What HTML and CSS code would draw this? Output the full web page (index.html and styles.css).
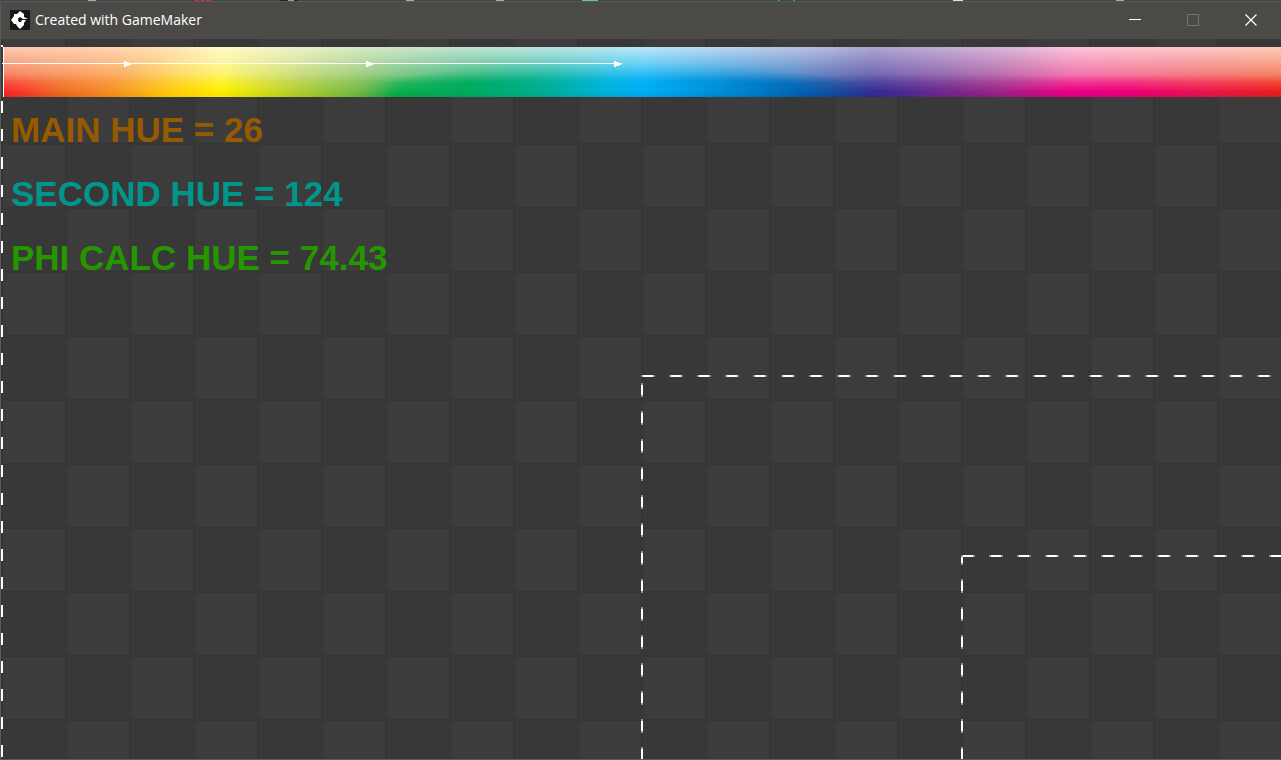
FILE: index.html
```html
<!DOCTYPE html>
<html lang="en">
<head>
<meta charset="utf-8">
<title>Created with GameMaker</title>
<link rel="stylesheet" href="styles.css">
</head>
<body>
<div class="desktop-edge"></div>
<div class="window">
  <header class="titlebar">
    <svg class="app-icon" viewBox="0 0 20 20" aria-hidden="true">
      <rect width="20" height="20" fill="#171717"/>
      <path d="M10 1l4 3v3l5 2.500v.5h-3l-2 3v2l-4 4-3-3-1-2H4l-3-4 3-4V4h3z" fill="#fff"/>
      <path d="M10 7l3 2h6v1h-7l-1 2H9l-1-2V8.500z" fill="#171717"/>
    </svg>
    <h1 class="title">Created with GameMaker</h1>
    <div class="controls">
      <button class="control" type="button" aria-label="Minimize">
        <svg viewBox="0 0 12 12" aria-hidden="true"><path d="M0 5.5h12" stroke="#fff"/></svg>
      </button>
      <button class="control" type="button" aria-label="Maximize" disabled>
        <svg viewBox="0 0 12 12" aria-hidden="true"><path d="M.5 .5h11v11H.5z" stroke="#74736f"/></svg>
      </button>
      <button class="control" type="button" aria-label="Close">
        <svg viewBox="0 0 12 12" aria-hidden="true"><path d="M.5 .5l11 11M11.5 .5l-11 11" stroke="#fff" stroke-width="1.2"/></svg>
      </button>
    </div>
  </header>
  <main class="room">
    <div class="view view-outer"></div>
    <div class="view view-middle"></div>
    <div class="view view-inner"></div>
    <div class="spectrum">
      <div class="band band-bottom"></div>
      <div class="band band-low"></div>
      <div class="band band-mid"></div>
      <div class="band band-low band-core"></div>
      <div class="band band-top"></div>
      <svg class="arrows" width="622" height="50" viewBox="0 0 622 50" shape-rendering="crispEdges" aria-hidden="true">
        <path d="M0 16h620v1H0z" fill="#fff"/>
        <path d="M122 14h2v1h3v1h2v2h-2v1h-3v1h-2zM364 14h2v1h3v1h2v2h-2v1h-3v1h-2zM612 14h2v1h3v1h3v1h-1v1h-2v1h-3v1h-2z" fill="#fff"/>
      </svg>
    </div>
    <div class="readout">
      <p class="hue hue-main">MAIN HUE = 26</p>
      <p class="hue hue-second">SECOND HUE = 124</p>
      <p class="hue hue-phi">PHI CALC HUE = 74.43</p>
    </div>
  </main>
</div>
</body>
</html>
```
FILE: styles.css
```css
* { box-sizing: border-box; }

body {
  margin: 0;
  min-height: 100vh;
  display: flex;
  flex-direction: column;
  background: #383838;
  font-family: "Liberation Sans", Arial, sans-serif;
}

/* Sliver of the desktop above the window */
.desktop-edge {
  height: 1px;
  background:
    linear-gradient(#aaa, #aaa) 88px 0 / 8px 1px no-repeat,
    linear-gradient(90deg, #e02c2c 4px, transparent 4px 6px, #e02c2c 6px 10px, transparent 10px 12px, #e02c2c 12px) 195px 0 / 16px 1px no-repeat,
    linear-gradient(90deg, #222 8px, #999 8px 14px, #222 14px) 280px 0 / 18px 1px no-repeat,
    linear-gradient(#aaa, #aaa) 406px 0 / 8px 1px no-repeat,
    linear-gradient(#aaa, #aaa) 496px 0 / 8px 1px no-repeat,
    linear-gradient(#55c5ab, #55c5ab) 582px 0 / 16px 1px no-repeat,
    linear-gradient(90deg, #2bb673 2px, transparent 2px 15px, #2ba98f 15px) 778px 0 / 17px 1px no-repeat,
    linear-gradient(#ddd, #ddd) 953px 0 / 10px 1px no-repeat,
    linear-gradient(#aaa, #aaa) 1116px 0 / 8px 1px no-repeat,
    #36474f;
}

.window {
  flex: 1;
  display: flex;
  flex-direction: column;
  border: solid #5a5a5a;
  border-width: 1px 0 1px 1px;
}

.titlebar {
  display: flex;
  align-items: center;
  height: 37px;
  padding: 0 1px 2px 9px;
  background: #4b4a47;
}

.app-icon { width: 20px; height: 20px; }

.title {
  margin: 0 auto 0 5px;
  font: 400 14px/20px "Open Sans", "Noto Sans", sans-serif;
  color: #fff;
}

.controls { display: flex; height: 100%; }

.control {
  display: flex;
  align-items: center;
  justify-content: center;
  width: 58px;
  padding: 0;
  border: 0;
  background: none;
}

.control svg { width: 12px; height: 12px; fill: none; }

/* Checkerboard of 64px tiles with 2px seams */
.room {
  position: relative;
  flex: 1;
  padding-top: 8px;
  overflow: hidden;
  background:
    repeating-linear-gradient(90deg, #353535 0 2px, transparent 2px 64px),
    repeating-linear-gradient(#353535 0 2px, transparent 2px 64px) 0 -24px / 100% 1024px,
    repeating-conic-gradient(#383838 0 25%, #3c3c3c 0 50%) 0 -24px / 128px 128px;
}

/* Dashed view outlines */
.view { position: absolute; right: 0; bottom: 0; }

.view-outer {
  top: 6px;
  left: 0;
  background: repeating-linear-gradient(#fff 0 12px, transparent 12px 28px) 0 0 / 2px 100% no-repeat;
}

.view-middle,
.view-inner {
  --dash: #929292 0 2px, #fff 2px 12px, #929292 12px 14px, transparent 14px 28px;
  background:
    repeating-linear-gradient(90deg, var(--dash)) 0 0 / 100% 2px no-repeat,
    repeating-linear-gradient(var(--dash)) 0 var(--start) / 2px calc(100% + 28px) no-repeat;
}

.view-middle { --start: 8px; top: 336px; left: 640px; }
.view-inner { --start: -4px; top: 516px; left: 960px; }

.spectrum {
  position: relative;
  height: 50px;
  margin-left: 2px;
  border-left: 1px solid #fff;
  box-shadow: -2px 0 #383838;
}

.band,
.arrows { position: absolute; inset: 0; }

.arrows { left: -2px; }

.band-bottom {
  background: linear-gradient(90deg, #e01e26 0%, #e0571c 4%, #e89010 9%, #f5c800 13%, #f2e600 17%, #a9c520 23%, #62ae35 28%, #00a040 30.5%, #009a4c 35%, #009a84 42%, #0098c8 47%, #0098dc 50%, #0078bb 56%, #0058a0 62%, #0a4090 65%, #2c2684 68%, #602480 73%, #8c1c7c 78%, #d0007c 83%, #d4006c 88%, #d41245 94%, #cf1d20 100%);
}

.band-low {
  background: linear-gradient(90deg, #ff2630 0%, #f26a2a 4%, #f89828 9%, #ffcc10 13%, #fff000 17%, #b4d038 23%, #74bb4c 28%, #0ab050 31%, #00ac5c 36%, #00b090 42%, #00b4dc 47%, #00b0f5 50%, #0090d8 56%, #0068b8 62%, #1850a0 65%, #353095 68%, #6c2c90 73%, #a0288c 78%, #ee0088 83%, #f0007c 88%, #f01650 94%, #f02020 100%);
  mask-image: linear-gradient(#000 84%, transparent 104%);
}

.band-mid {
  background: linear-gradient(90deg, #f47050 0%, #f78a50 4%, #faa650 9%, #fed250 13%, #fff450 17%, #c4d86c 23%, #94c870 28%, #5cbe78 32%, #2cb67c 37%, #08b8a4 42%, #08bcdc 47%, #10baf5 50%, #209cdc 56%, #4382c4 62%, #566cb2 65%, #6258aa 68%, #885aa8 73%, #b45ca4 78%, #f062a4 83.5%, #f2648c 88%, #f26868 94%, #f2704a 100%);
  mask-image: linear-gradient(#000 54%, transparent 88%);
}

/* Fully saturated green-to-blue part that reaches higher than the rest */
.band-core {
  mask-image:
    linear-gradient(#000 84%, transparent 104%),
    radial-gradient(ellipse 21% 75% at 48% 105%, #000 65%, transparent);
  mask-composite: intersect;
}

.band-top {
  background: linear-gradient(90deg, #fbc8ae 0%, #fcccae 6%, #fddcae 12%, #fff8c8 17%, #e8f0c4 23%, #d2e6c2 28%, #bce0cc 36%, #b4e2dc 43%, #b4e4fa 50%, #b4d0ee 57%, #b4bce0 63%, #a8a2d0 68%, #bea8d2 73%, #dab4d6 79%, #fbc0d8 84%, #fbc4c8 91%, #fcc8b4 100%);
  mask-image: linear-gradient(#000 4%, transparent 70%);
}

.readout {
  display: flex;
  flex-direction: column;
  gap: 24px;
  padding: 13px 10px;
  position: relative;
}

.hue {
  margin: 0;
  font-size: 35px;
  font-weight: 700;
  line-height: 40px;
}

.hue-main { color: #965a00; }
.hue-second { color: #00968c; }
.hue-phi { color: #269600; }
```
